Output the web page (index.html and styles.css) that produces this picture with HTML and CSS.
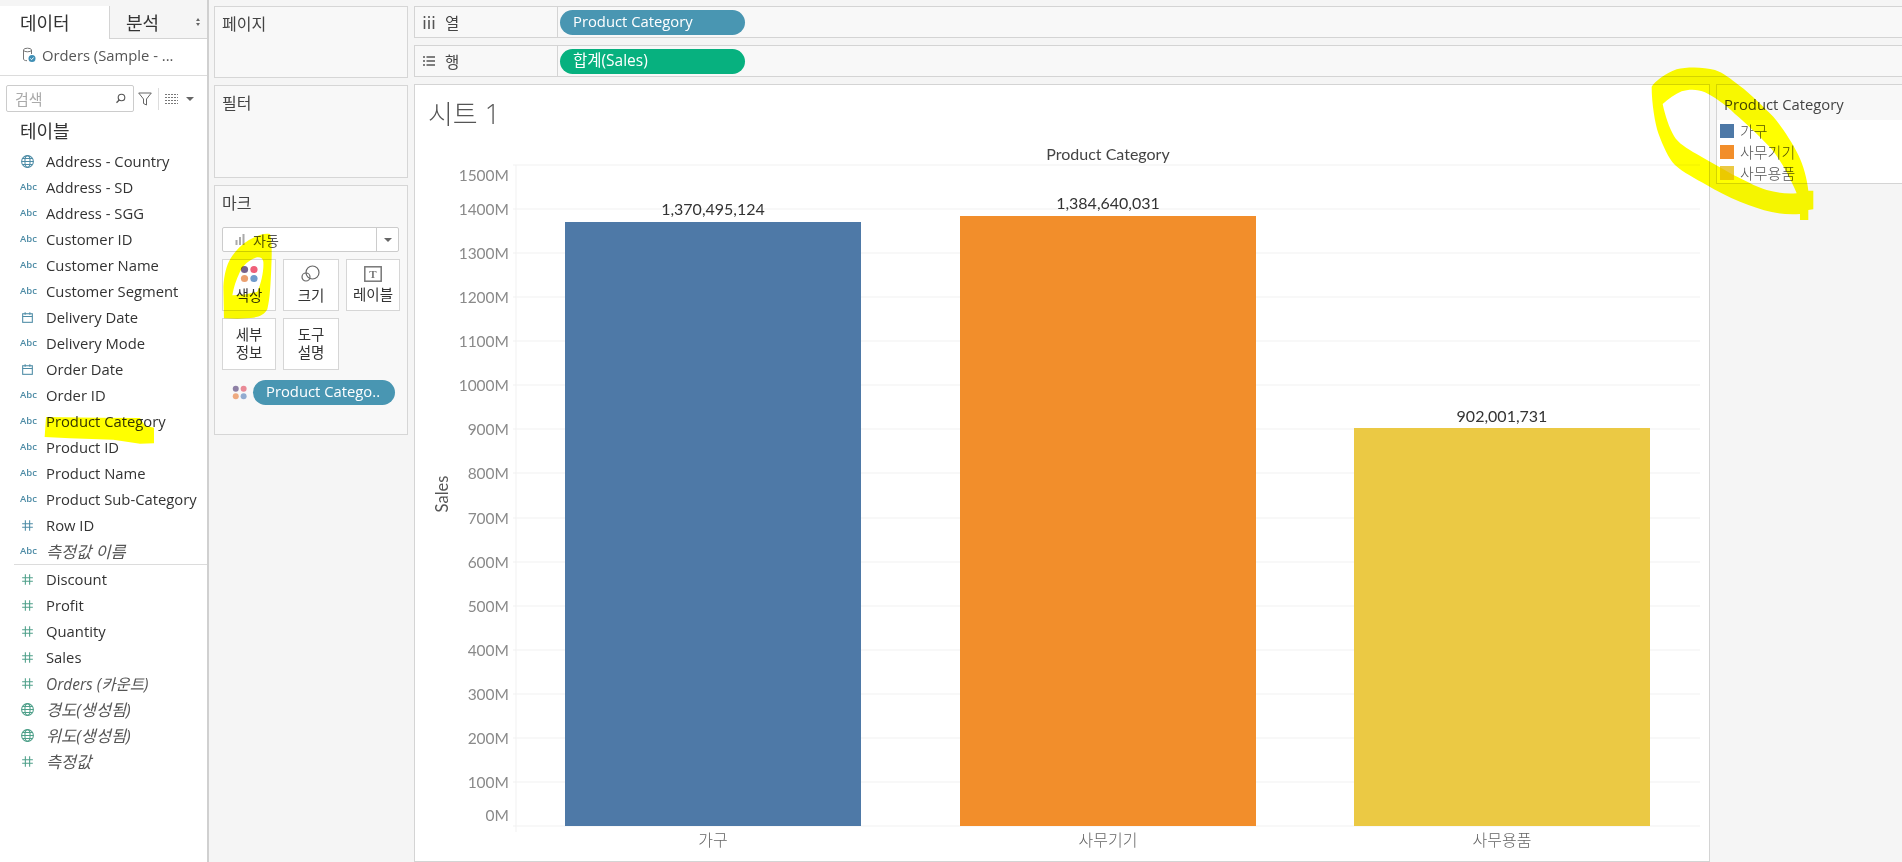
FILE: index.html
```html
<!DOCTYPE html>
<html lang="ko">
<head>
<meta charset="utf-8">
<title>시트 1</title>
<link rel="stylesheet" href="styles.css">
</head>
<body>
<svg class="defs" width="0" height="0" aria-hidden="true">
  <symbol id="globe" viewBox="0 0 14 14"><g fill="none" stroke="currentColor" stroke-width="1"><circle cx="7" cy="7" r="5.5"/><ellipse cx="7" cy="7" rx="2.4" ry="5.5"/><path d="M1.5 7h11M2.4 4.2h9.2M2.4 9.8h9.2"/></g></symbol>
  <symbol id="cal" viewBox="0 0 14 14"><g fill="none" stroke="currentColor" stroke-width="1"><rect x="2.5" y="3.5" width="9" height="8"/><path d="M2.5 6h9M4.8 2v2.4M9.2 2v2.4"/></g></symbol>
  <symbol id="hash" viewBox="0 0 14 14"><path d="M5 2v10M9 2v10M2 5.3h10M2 8.7h10" fill="none" stroke="currentColor" stroke-width="1"/></symbol>
  <symbol id="dots" viewBox="0 0 16 16"><circle cx="4" cy="4" r="3.2" fill="var(--d1)"/><circle cx="12.4" cy="4" r="3.2" fill="var(--d2)"/><circle cx="4" cy="12" r="3.2" fill="var(--d3)"/><circle cx="12.4" cy="12" r="3.2" fill="var(--d4)"/></symbol>
</svg>

<div class="app">
  <aside class="data">
    <div class="tabs">
      <div class="tab tab-on">데이터</div>
      <div class="tab tab-off">분석<span class="sort"><i></i><i></i></span></div>
    </div>
    <div class="source">
      <svg class="source-icon" width="14" height="16" viewBox="0 0 14 16"><g fill="none" stroke="#777" stroke-width="1"><ellipse cx="5.5" cy="3" rx="4" ry="1.8"/><path d="M1.5 3v9c0 1 1.5 1.7 3.5 1.7M9.500 3v4"/></g><circle cx="10" cy="11.500" r="3.500" fill="#3f8fb5"/><path d="M8.400 11.500l1.200 1.200 2-2.200" fill="none" stroke="#fff" stroke-width="1"/></svg>
      <span>Orders (Sample - ...</span>
    </div>
    <div class="tools">
      <div class="search">
        <span>검색</span>
        <svg width="11" height="11" viewBox="0 0 11 11"><circle cx="6.500" cy="4.500" r="3.300" fill="none" stroke="#555" stroke-width="1.100"/><path d="M4.200 7L1.500 9.700" stroke="#555" stroke-width="1.300"/></svg>
      </div>
      <svg class="funnel" width="14" height="14" viewBox="0 0 14 14"><path d="M.7 1h12.600L8.500 7v6l-3-1.500V7z" fill="none" stroke="#666" stroke-width="1"/></svg>
      <span class="tool-sep"></span>
      <svg class="listview" width="13" height="10" viewBox="0 0 13 10"><path d="M0 .5h13M0 3.500h13M0 6.500h13M0 9.500h13" stroke="#777" stroke-width="1" stroke-dasharray="2 1"/></svg>
      <span class="caret"></span>
    </div>
    <h2 class="tables">테이블</h2>
    <ul class="fields">
      <li class="field"><svg class="ico blue"><use href="#globe"/></svg><span>Address - Country</span></li>
      <li class="field"><b class="abc">Abc</b><span>Address - SD</span></li>
      <li class="field"><b class="abc">Abc</b><span>Address - SGG</span></li>
      <li class="field"><b class="abc">Abc</b><span>Customer ID</span></li>
      <li class="field"><b class="abc">Abc</b><span>Customer Name</span></li>
      <li class="field"><b class="abc">Abc</b><span>Customer Segment</span></li>
      <li class="field"><svg class="ico blue"><use href="#cal"/></svg><span>Delivery Date</span></li>
      <li class="field"><b class="abc">Abc</b><span>Delivery Mode</span></li>
      <li class="field"><svg class="ico blue"><use href="#cal"/></svg><span>Order Date</span></li>
      <li class="field"><b class="abc">Abc</b><span>Order ID</span></li>
      <li class="field"><b class="abc">Abc</b><span>Product Category</span></li>
      <li class="field"><b class="abc">Abc</b><span>Product ID</span></li>
      <li class="field"><b class="abc">Abc</b><span>Product Name</span></li>
      <li class="field"><b class="abc">Abc</b><span>Product Sub-Category</span></li>
      <li class="field"><svg class="ico blue"><use href="#hash"/></svg><span>Row ID</span></li>
      <li class="field calc calc-ko"><b class="abc">Abc</b><span>측정값 이름</span></li>
    </ul>
    <ul class="fields measures">
      <li class="field"><svg class="ico green"><use href="#hash"/></svg><span>Discount</span></li>
      <li class="field"><svg class="ico green"><use href="#hash"/></svg><span>Profit</span></li>
      <li class="field"><svg class="ico green"><use href="#hash"/></svg><span>Quantity</span></li>
      <li class="field"><svg class="ico green"><use href="#hash"/></svg><span>Sales</span></li>
      <li class="field calc"><svg class="ico green"><use href="#hash"/></svg><span>Orders (카운트)</span></li>
      <li class="field calc calc-ko"><svg class="ico green"><use href="#globe"/></svg><span>경도(생성됨)</span></li>
      <li class="field calc calc-ko"><svg class="ico green"><use href="#globe"/></svg><span>위도(생성됨)</span></li>
      <li class="field calc calc-ko"><svg class="ico green"><use href="#hash"/></svg><span>측정값</span></li>
    </ul>
  </aside>

  <section class="cards">
    <div class="card card-pages"><h3>페이지</h3></div>
    <div class="card card-filters"><h3>필터</h3></div>
    <div class="card card-marks">
      <h3>마크</h3>
      <div class="mark-type">
        <svg width="11" height="11" viewBox="0 0 11 11"><path d="M1.500 11V6M5 11V3M8.500 11V0" stroke="#aaa" stroke-width="2"/></svg>
        <span class="mark-name">자동</span>
        <span class="mark-drop"><span class="caret"></span></span>
      </div>
      <div class="mark-grid">
        <div class="mark-btn"><svg class="dots-main" width="18" height="18"><use href="#dots"/></svg><span>색상</span></div>
        <div class="mark-btn"><svg width="20" height="18" viewBox="0 0 20 18"><g fill="none" stroke="#666" stroke-width="1.200"><circle cx="11.500" cy="7.500" r="6.500"/><circle cx="5" cy="12" r="4"/></g></svg><span>크기</span></div>
        <div class="mark-btn"><svg width="18" height="16" viewBox="0 0 18 16"><rect x=".8" y=".8" width="16.400" height="14.400" fill="none" stroke="#777" stroke-width="1.500"/><text x="9" y="12" class="t-icon">T</text></svg><span>레이블</span></div>
        <div class="mark-btn"><span>세부<br>정보</span></div>
        <div class="mark-btn"><span>도구<br>설명</span></div>
      </div>
      <div class="mark-pill-row">
        <svg class="dots-soft" width="15" height="15"><use href="#dots"/></svg>
        <div class="pill pill-mark">Product Catego..</div>
      </div>
    </div>
  </section>

  <main class="view">
    <div class="shelf">
      <div class="shelf-label">
        <svg width="12" height="13" viewBox="0 0 12 13"><path d="M1.500 4v9M6 4v9M10.500 4v9M1.500 0v2M6 0v2M10.500 0v2" stroke="#555" stroke-width="1.600"/></svg>
        <span>열</span>
      </div>
      <div class="shelf-body"><div class="pill pill-dim">Product Category</div></div>
    </div>
    <div class="shelf">
      <div class="shelf-label">
        <svg width="12" height="10" viewBox="0 0 12 10"><path d="M0 1h2M3.500 1H12M0 5h2M3.500 5H12M0 9h2M3.500 9H12" stroke="#555" stroke-width="1.600"/></svg>
        <span>행</span>
      </div>
      <div class="shelf-body"><div class="pill pill-measure">합계(Sales)</div></div>
    </div>
    <div class="stage">
      <div class="sheet">
        <h1 class="sheet-title">시트 1</h1>
        <svg class="chart" width="1294" height="721" viewBox="415 140 1294 721">
          <path class="grid" d="M513 165H1700M513 209H1700M513 253H1700M513 297H1700M513 341H1700M513 385H1700M513 429H1700M513 473H1700M513 518H1700M513 562H1700M513 606H1700M513 650H1700M513 694H1700M513 738H1700M513 782H1700M513 826H1700M516 165V832"/>
          <text class="head" x="1108" y="160">Product Category</text>
          <g class="tick">
            <text x="509" y="181">1500M</text><text x="509" y="215">1400M</text><text x="509" y="259">1300M</text><text x="509" y="303">1200M</text>
            <text x="509" y="347">1100M</text><text x="509" y="391">1000M</text><text x="509" y="435">900M</text><text x="509" y="479">800M</text>
            <text x="509" y="524">700M</text><text x="509" y="568">600M</text><text x="509" y="612">500M</text><text x="509" y="656">400M</text>
            <text x="509" y="700">300M</text><text x="509" y="744">200M</text><text x="509" y="788">100M</text><text x="509" y="821">0M</text>
          </g>
          <text class="axis-title" transform="translate(448 494) rotate(-90)">Sales</text>
          <rect class="bar-a" x="565" y="222" width="296" height="604"/>
          <rect class="bar-b" x="960" y="216" width="296" height="610"/>
          <rect class="bar-c" x="1354" y="428" width="296" height="398"/>
          <text class="value" x="713" y="215">1,370,495,124</text>
          <text class="value" x="1108" y="209">1,384,640,031</text>
          <text class="value" x="1502" y="422">902,001,731</text>
          <text class="cat" x="713" y="846">가구</text>
          <text class="cat" x="1108" y="846">사무기기</text>
          <text class="cat" x="1502" y="846">사무용품</text>
        </svg>
      </div>
      <div class="legend">
        <div class="legend-title">Product Category</div>
        <ul class="legend-list">
          <li><i class="sw sw-a"></i>가구</li>
          <li><i class="sw sw-b"></i>사무기기</li>
          <li><i class="sw sw-c"></i>사무용품</li>
        </ul>
      </div>
    </div>
  </main>
</div>

<svg class="marker" width="1902" height="862" viewBox="0 0 1902 862" aria-hidden="true">
  <path transform="translate(30 405) scale(.3333)" d="M48 36L200 38L330 39L345 62L372 68L372 115L330 116L250 104L120 100L44 96Z"/>
  <path transform="translate(214 220) scale(.3333)" fill-rule="evenodd" d="M30 295L28 200C30 165 38 135 50 115C62 95 80 75 105 60C125 48 150 38 168 42C174 60 174 100 172 140C170 190 168 235 160 268C150 285 135 292 110 294L70 296ZM55 226C58 205 66 180 78 155C88 135 105 120 125 113C138 110 146 114 148 125C150 150 142 190 130 215C110 222 80 226 55 226Z"/>
  <path transform="translate(1640 60) scale(.3333)" fill-rule="evenodd" d="M35 80C45 65 75 40 110 28C140 20 190 20 225 30C250 38 270 55 300 78C330 100 375 145 400 170C425 200 455 245 475 285C490 315 502 360 505 392L520 392L520 448L505 450L505 480L480 480L480 462C450 464 420 462 395 456C365 450 335 438 300 425C265 412 230 392 200 375C165 355 130 338 105 315C85 295 70 260 55 220C45 190 35 130 35 80ZM68 132C85 117 105 102 125 94C145 87 175 87 195 97C220 110 255 132 285 162C315 187 355 225 390 262C415 290 445 340 470 400C440 403 410 398 380 390C345 380 310 358 280 345C245 325 205 302 170 282C140 265 115 250 102 228C88 205 75 165 68 132Z"/>
</svg>
</body>
</html>
```

FILE: styles.css
```css
* { box-sizing: border-box; }
html, body { margin: 0; padding: 0; }
body {
  position: relative;
  width: 1902px;
  height: 862px;
  overflow: hidden;
  background: #f5f5f5;
  color: #333;
  font-family: "Open Sans", "Noto Sans CJK KR", sans-serif;
  font-size: 14.8px;
}
h1, h2, h3, ul { margin: 0; padding: 0; font-weight: 400; list-style: none; }
.defs { position: absolute; }

.app {
  display: grid;
  grid-template-columns: 207px 207px 1488px;
  height: 862px;
}

/* Data pane */
.data { margin-top: 6px; background: #fff; display: flex; flex-direction: column; }
.tabs { display: flex; height: 33px; flex: none; }
.tab { font-size: 18px; line-height: 34px; color: #333; }
.tab-on { width: 109px; padding-left: 20px; }
.tab-off {
  flex: 1;
  padding-left: 16px;
  background: #f5f5f5;
  border-left: 1px solid #d4d4d4;
  border-bottom: 1px solid #d4d4d4;
  position: relative;
}
.sort { position: absolute; right: 7px; top: 12px; display: flex; flex-direction: column; gap: 2px; }
.sort i { display: block; width: 0; height: 0; border: 3px solid transparent; border-width: 0 2.5px 3px; border-bottom-color: #666; }
.sort i + i { border-width: 3px 2.5px 0; border-top-color: #666; border-bottom-color: transparent; }
.source {
  height: 37px;
  flex: none;
  display: flex;
  align-items: center;
  gap: 6px;
  padding: 0 0 4px 22px;
  border-bottom: 1px solid #dcdcdc;
  color: #555;
}
.tools { display: flex; align-items: center; height: 27px; margin-top: 9px; padding-left: 6px; flex: none; }
.search {
  width: 128px;
  height: 27px;
  border: 1px solid #ccc;
  border-radius: 2px;
  display: flex;
  align-items: center;
  justify-content: space-between;
  padding: 0 7px 0 8px;
  color: #aaa;
  background: #fff;
  font-size: 15px;
}
.funnel { margin-left: 4px; }
.tool-sep { width: 1px; height: 22px; background: #ddd; margin: 0 6px; }
.listview { margin-right: 6px; }
.caret { display: inline-block; width: 0; height: 0; border: 4px solid transparent; border-bottom: 0; border-top: 4px solid #666; margin-left: 2px; }
.tables { font-size: 18px; line-height: 26px; margin: 6px 0 4px 20px; color: #333; flex: none; }
.fields { padding-left: 0; }
.field { height: 26px; display: flex; align-items: center; color: #333; padding-left: 20px; white-space: nowrap; }
.field > span { margin-left: 26px; }
.field .abc + span { margin-left: 10px; }
.field .ico + span { margin-left: 11px; }
.abc { width: 16px; font: 600 9.500px/1 "Open Sans", sans-serif; color: #4e8ca6; }
.ico { width: 15px; height: 15px; flex: none; margin-left: 0; }
.blue { color: #4e8ca6; }
.green { color: #4fa08a; }
.calc span { font-style: italic; color: #555; font-size: 15.500px; }
.calc-ko span { font-size: 16.400px; }
.measures { border-top: 1px solid #dcdcdc; margin-left: 14px; padding-top: 1px; }
.measures .field { padding-left: 6px; }

/* Cards */
.cards {
  border-left: 2px solid #d0d0d0;
  padding: 6px 6px 0 5px;
  display: flex;
  flex-direction: column;
  gap: 7px;
}
.card { border: 1px solid #d6d6d6; background: #f8f8f8; padding: 7px 8px 0 7px; }
.card h3 { font-size: 16px; line-height: 20px; color: #444; }
.card-pages { height: 72px; }
.card-filters { height: 93px; }
.card-marks { height: 250px; }
.mark-type {
  display: flex;
  align-items: center;
  height: 25px;
  margin-top: 14px;
  border: 1px solid #ccc;
  border-radius: 2px;
  background: #fff;
  padding-left: 12px;
  color: #555;
  font-size: 14px;
}
.mark-name { margin-left: 7px; flex: 1; }
.mark-drop { width: 22px; height: 100%; border-left: 1px solid #ccc; display: flex; align-items: center; justify-content: center; }
.mark-drop .caret { margin: 0; }
.mark-grid { display: grid; grid-template-columns: 54px 56px 54px; column-gap: 7px; row-gap: 7px; margin-top: 7px; }
.mark-btn {
  height: 52px;
  border: 1px solid #d6d6d6;
  background: #fff;
  display: flex;
  flex-direction: column;
  align-items: center;
  justify-content: center;
  gap: 4px;
  font-size: 14.500px;
  line-height: 18px;
  color: #333;
  text-align: center;
}
.t-icon { font: 700 11px "Liberation Serif", serif; fill: #777; text-anchor: middle; }
.dots-main { --d1: #75628c; --d2: #ef6079; --d3: #eba070; --d4: #6f9bcc; }
.dots-soft { --d1: #8e80a5; --d2: #e98a96; --d3: #eeaa80; --d4: #92acd0; }
.mark-pill-row { display: flex; align-items: center; gap: 6px; margin: 10px 0 0 10px; }
.pill { height: 25px; border-radius: 13px; color: #fff; line-height: 23px; padding-left: 13px; white-space: nowrap; font-size: 14.8px; }
.pill-mark { width: 142px; background: #4996b2; }
.pill-dim { width: 185px; background: #4996b2; }
.pill-measure { width: 185px; background: #07b17f; font-size: 15.500px; }

/* View */
.view { padding-top: 6px; display: flex; flex-direction: column; gap: 7px; }
.shelf { height: 32px; display: flex; border: 1px solid #d4d4d4; border-right: 0; background: #f8f8f8; flex: none; }
.shelf-label {
  width: 143px;
  border-right: 1px solid #d4d4d4;
  display: flex;
  align-items: center;
  gap: 10px;
  padding-left: 8px;
  color: #444;
  font-size: 15.500px;
}
.shelf-body { padding: 3px 2px; }
.stage { flex: 1; display: flex; gap: 6px; align-items: flex-start; }
.sheet { width: 1296px; height: 778px; border: 1px solid #d4d4d4; background: #fff; display: flex; flex-direction: column; }
.sheet-title { height: 55px; padding: 11px 0 0 13px; font-size: 27px; line-height: 36px; font-weight: 300; color: #555; }
.chart { display: block; flex: none; }
.grid { fill: none; stroke: #f1f1f1; stroke-width: 1; }
.head { font: 400 16px Lato, sans-serif; fill: #444; text-anchor: middle; }
.tick text { font: 400 15.500px Lato, sans-serif; fill: #8a8a8a; text-anchor: end; }
.axis-title { font: 400 16.500px Lato, sans-serif; fill: #555; text-anchor: middle; }
.value { font: 400 16px Lato, sans-serif; fill: #333; text-anchor: middle; }
.cat { font: 300 16px "Noto Sans CJK KR", sans-serif; fill: #666; text-anchor: middle; }
.bar-a { fill: #4e79a7; }
.bar-b { fill: #f28e2b; }
.bar-c { fill: #ebc944; }

/* Legend */
.legend { width: 186px; height: 100px; border: 1px solid #d4d4d4; border-right: 0; background: #fff; flex: none; }
.legend-title { height: 35px; background: #f8f8f8; padding-left: 7px; line-height: 38px; color: #444; }
.legend-list { padding: 0 0 0 3px; }
.legend-list li { height: 21px; display: flex; align-items: center; gap: 6px; font-size: 15px; font-weight: 300; color: #555; }
.sw { width: 14px; height: 14px; flex: none; }
.sw-a { background: #4e79a7; }
.sw-b { background: #f28e2b; }
.sw-c { background: #ebc944; }

/* Highlighter strokes over the screenshot */
.marker { position: absolute; left: 0; top: 0; mix-blend-mode: multiply; pointer-events: none; }
.marker path { fill: #ffff00; }
```
